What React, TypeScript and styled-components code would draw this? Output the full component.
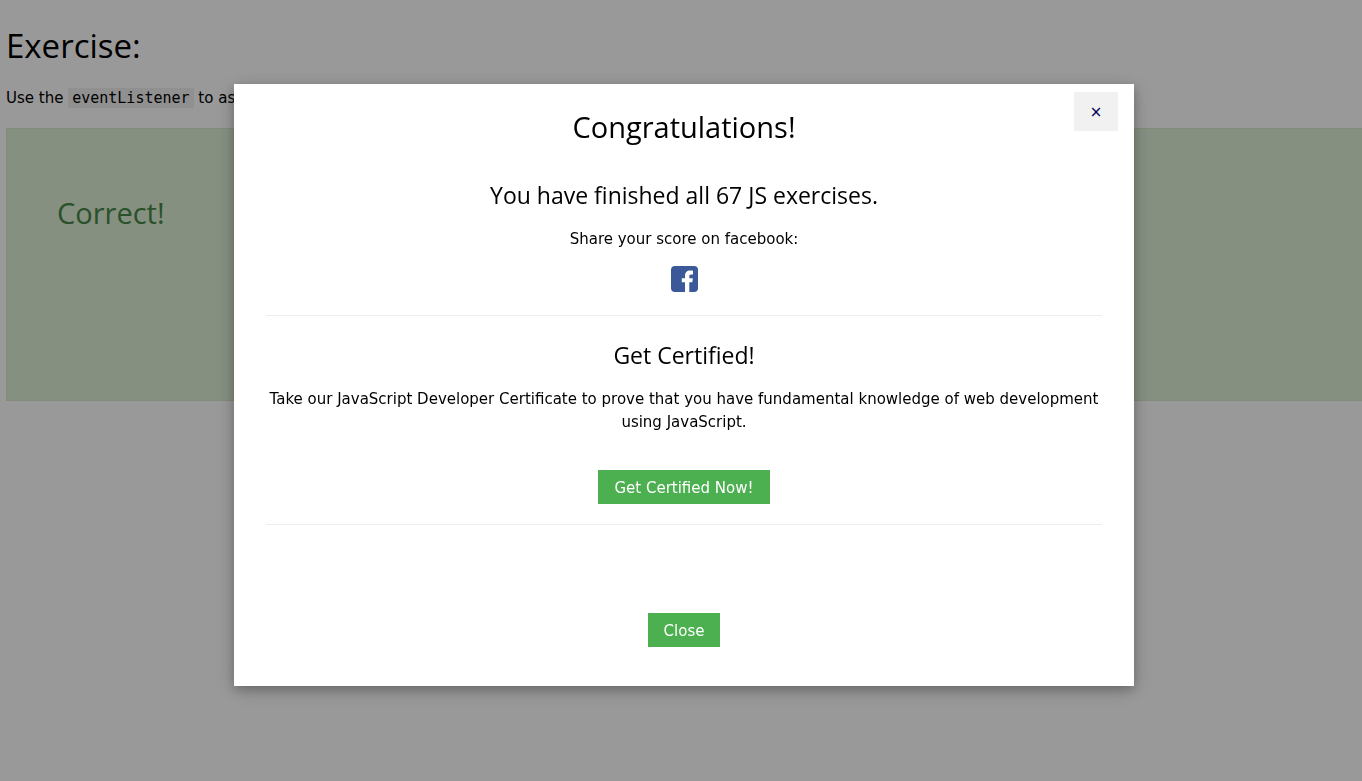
import React, { useState } from "react";
import styled, { createGlobalStyle } from "styled-components";

const GlobalStyle = createGlobalStyle`
  *, *::before, *::after { box-sizing: border-box; }
  body {
    margin: 0;
    background: #fff;
    color: #000;
    font-family: Verdana, "DejaVu Sans", sans-serif;
    font-size: 15px;
    line-height: 23px;
    overflow: hidden;
  }
`;

const headingFont = `"Segoe UI", "Open Sans", "Noto Sans", sans-serif`;

const Page = styled.main`
  min-height: 100vh;
  padding: 19px 0 0 6px;
`;

const Title = styled.h1`
  margin: 0;
  font: 400 33px/54px ${headingFont};
`;

const Instruction = styled.p`
  margin: 14px 0 18px;
`;

const Code = styled.code`
  padding: 1px 4px;
  background: #f1f1f1;
  font: 15px/17px Consolas, "DejaVu Sans Mono", monospace;
`;

const Result = styled.section`
  min-height: 273px;
  padding: 61px 50px;
  border: 1px solid #d6e9c6;
  border-right: 0;
  background: #dff0d8;
  color: #468847;
`;

const ResultTitle = styled.h2`
  margin: 0;
  font: 400 29px/45px ${headingFont};
`;

const Overlay = styled.div`
  position: fixed;
  inset: 0;
  display: flex;
  justify-content: center;
  align-items: flex-start;
  padding: 84px 0 0 6px;
  background: rgba(0, 0, 0, 0.4);
  overflow: auto;
`;

const Dialog = styled.div`
  position: relative;
  width: 900px;
  max-width: 100%;
  padding: 20px 32px 39px;
  background: #fff;
  text-align: center;
  box-shadow: 0 4px 10px 0 rgba(0, 0, 0, 0.2), 0 4px 20px 0 rgba(0, 0, 0, 0.19);
`;

const DialogTitle = styled.h2`
  margin: 0 0 28px;
  font: 400 29px/45px ${headingFont};
`;

const Section = styled.section`
  padding-bottom: 20px;
  border-bottom: 1px solid #eee;

  & + & {
    padding-top: 21px;
  }
`;

const Subtitle = styled.h3`
  margin: 0 0 15px;
  font: 400 23px/36px ${headingFont};
`;

const Text = styled.p`
  margin: 0;
`;

const ShareLink = styled.a`
  display: block;
  width: 27px;
  height: 27px;
  margin: 15px auto 2px;

  svg {
    display: block;
  }
`;

const Button = styled.button`
  height: 34px;
  padding: 2px 16px 0;
  border: 0;
  background: #4caf50;
  color: #fff;
  font: inherit;
  cursor: pointer;
`;

const CertifyButton = styled(Button)`
  margin-top: 36px;
  vertical-align: top;
`;

const Footer = styled.footer`
  display: flex;
  justify-content: center;
  padding-top: 88px;
`;

const CloseIconButton = styled(Button)`
  position: absolute;
  top: 8px;
  right: 16px;
  width: 44px;
  height: 39px;
  padding: 2px 0 0;
  background: #f1f1f1;
  color: #000050;
`;

function FacebookIcon() {
  return (
    <svg width="27" height="27" viewBox="0 0 27 27" aria-hidden="true">
      <rect width="27" height="26" rx="4" fill="#3b5998" />
      <path
        d="M14 26v-9.800h-3.200v-3.900H14V10c0-3.500 2-5.400 5-5.400 1.400 0 2.500.1 3 .2v3.600h-1.800c-1.600 0-1.900.8-1.900 1.900v2h3.500l-.5 3.900h-3V26z"
        fill="#fff"
      />
    </svg>
  );
}

export default function App() {
  const [open, setOpen] = useState(true);
  const close = () => setOpen(false);

  return (
    <>
      <GlobalStyle />
      <Page>
        <Title>Exercise:</Title>
        <Instruction>
          Use the <Code>eventListener</Code> to assign
        </Instruction>
        <Result>
          <ResultTitle>Correct!</ResultTitle>
        </Result>
      </Page>
      {open && (
        <Overlay>
          <Dialog role="dialog" aria-modal="true" aria-labelledby="dialog-title">
            <CloseIconButton type="button" aria-label="Close" onClick={close}>
              ×
            </CloseIconButton>
            <DialogTitle id="dialog-title">Congratulations!</DialogTitle>
            <Section>
              <Subtitle>You have finished all 67 JS exercises.</Subtitle>
              <Text>Share your score on facebook:</Text>
              <ShareLink href="#share" aria-label="Share on facebook">
                <FacebookIcon />
              </ShareLink>
            </Section>
            <Section>
              <Subtitle>Get Certified!</Subtitle>
              <Text>
                Take our JavaScript Developer Certificate to prove that you have fundamental
                knowledge of web development using JavaScript.
              </Text>
              <CertifyButton type="button">Get Certified Now!</CertifyButton>
            </Section>
            <Footer>
              <Button type="button" onClick={close}>
                Close
              </Button>
            </Footer>
          </Dialog>
        </Overlay>
      )}
    </>
  );
}
